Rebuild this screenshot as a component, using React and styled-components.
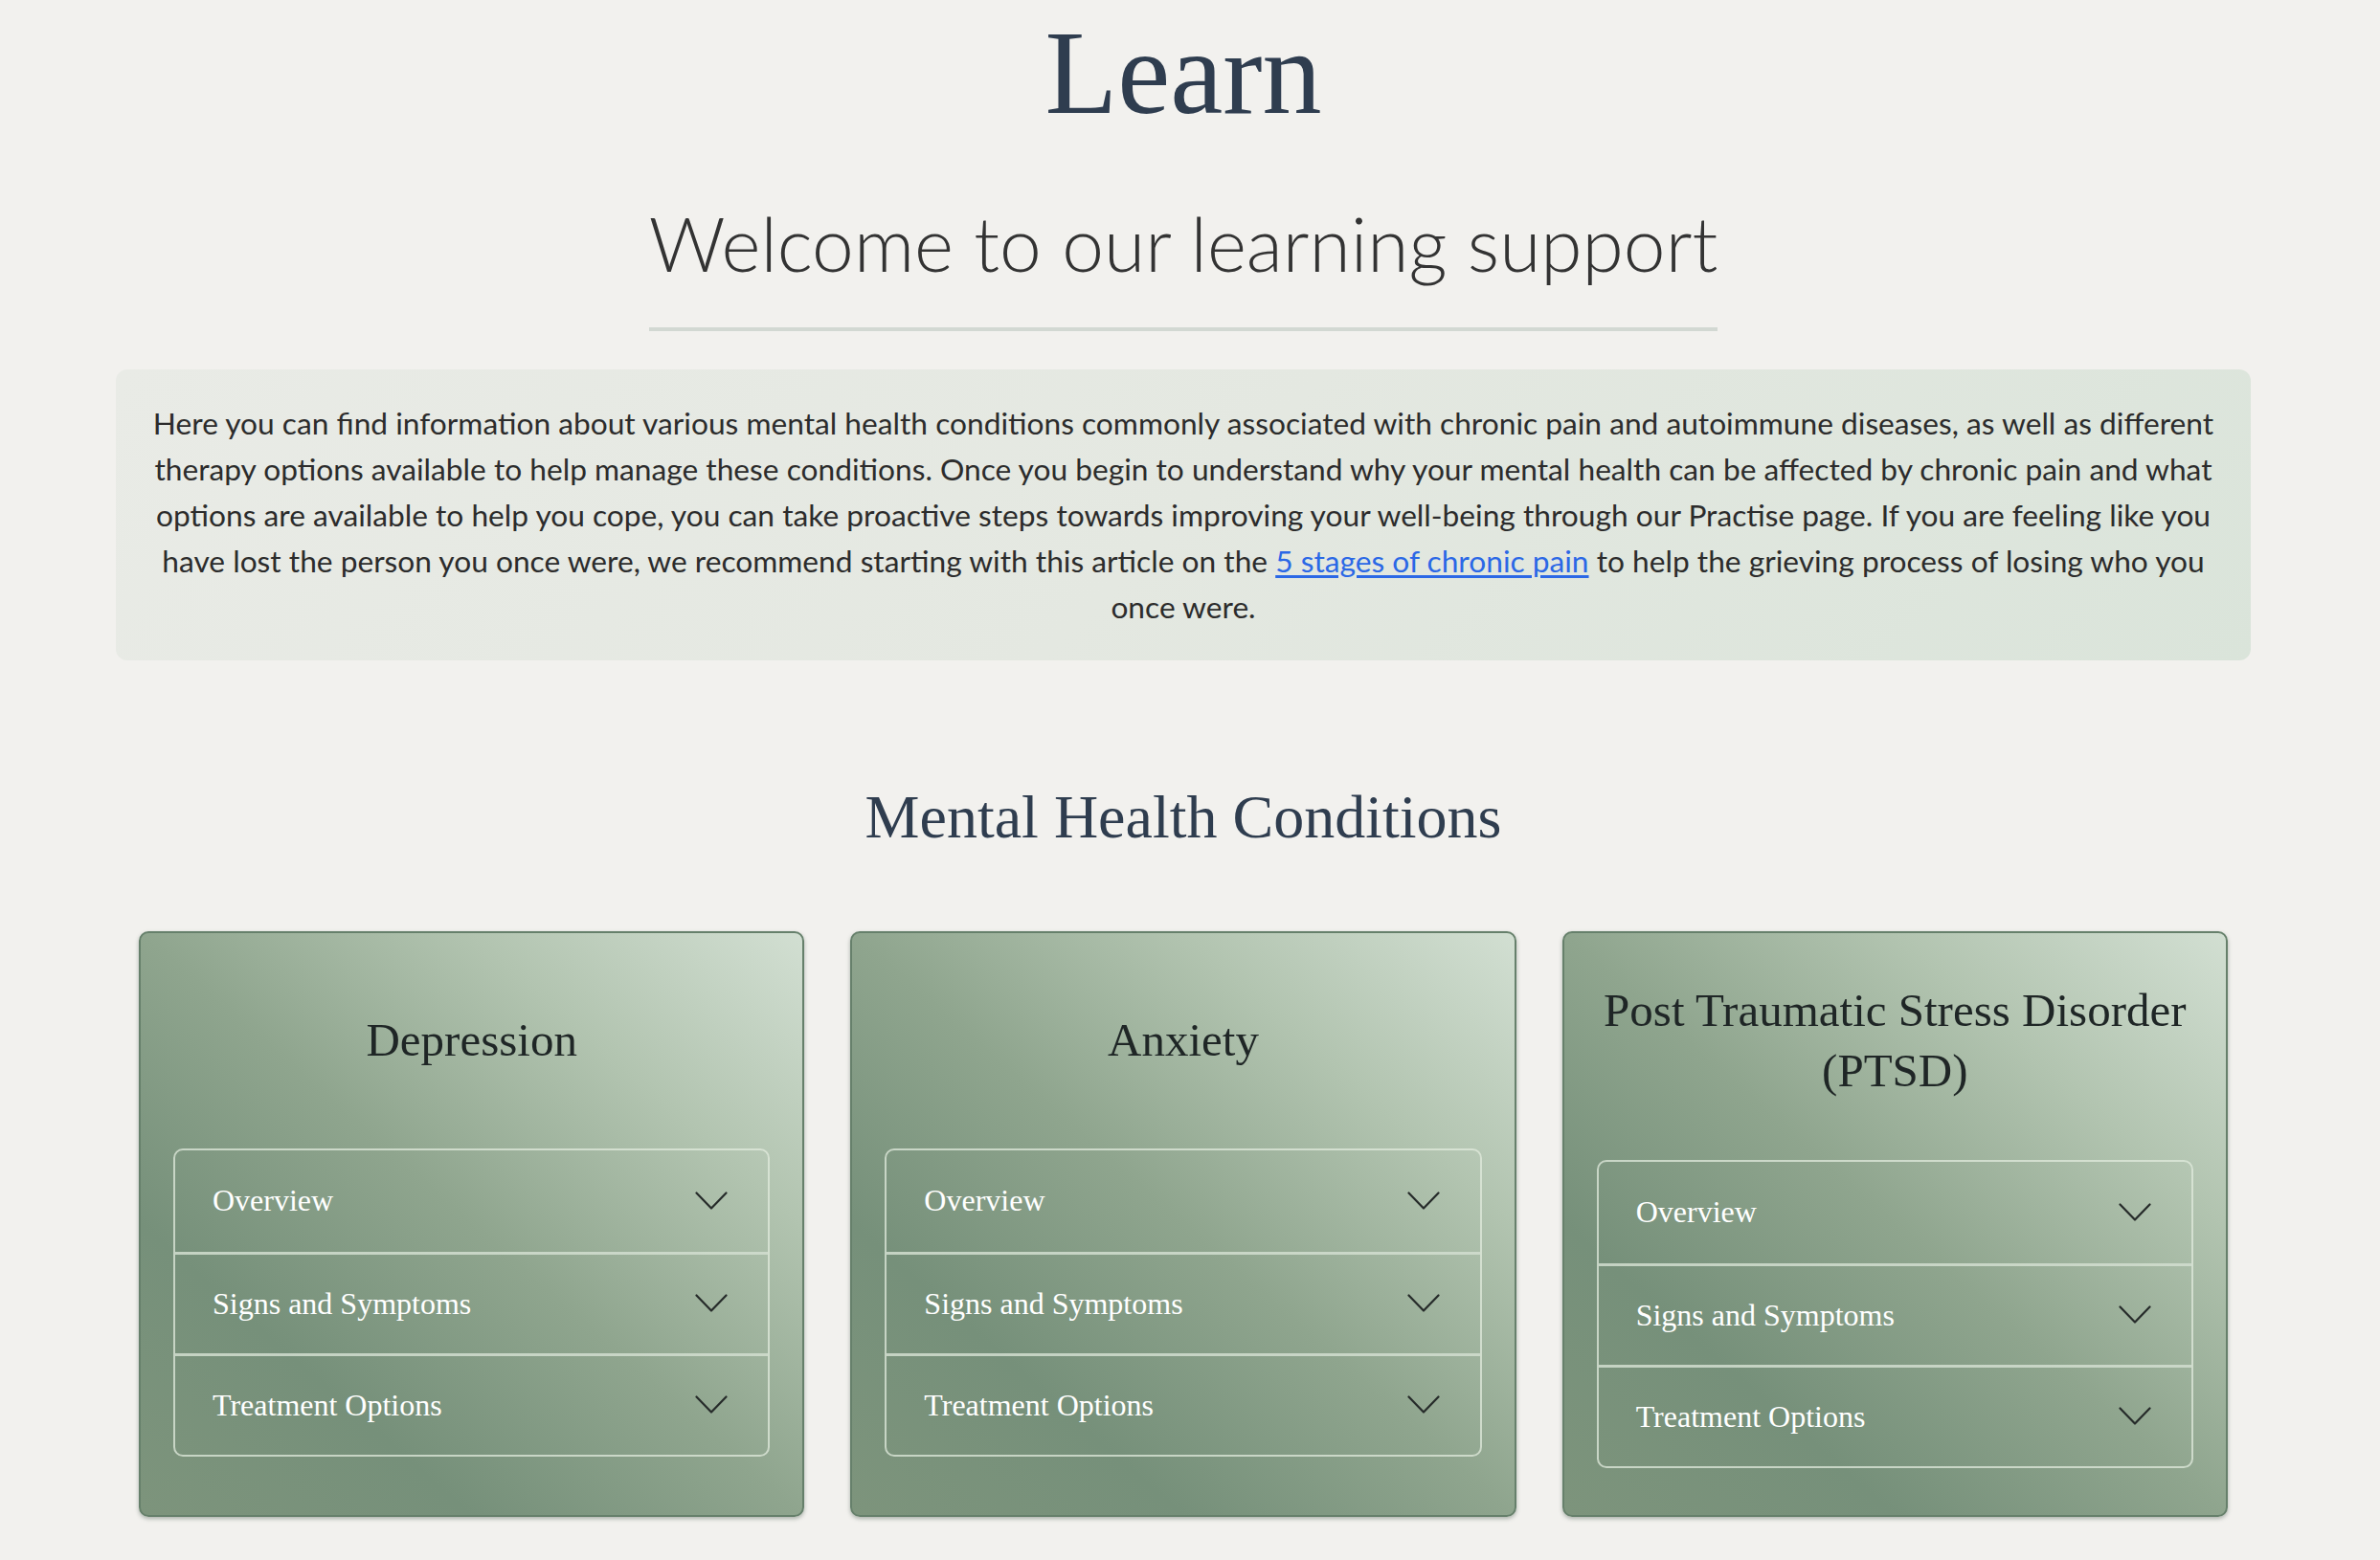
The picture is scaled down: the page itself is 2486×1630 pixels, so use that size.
import React from 'react';
import styled, { createGlobalStyle } from 'styled-components';

const GlobalStyle = createGlobalStyle`
  html, body {
    margin: 0;
    padding: 0;
    background: #f2f1ee;
  }
  body {
    min-height: 100vh;
    font-family: Lato, "Open Sans", sans-serif;
  }
`;

const conditions = [
  { title: 'Depression' },
  { title: 'Anxiety' },
  { title: 'Post Traumatic Stress Disorder (PTSD)' },
];

const sections = ['Overview', 'Signs and Symptoms', 'Treatment Options'];

const Chevron = () => (
  <svg width="34" height="20" viewBox="0 0 34 20" fill="none">
    <polyline points="1.5,1.5 17,17.5 32.5,1.5" stroke="#262b2a" strokeWidth="2.2" strokeLinecap="round" strokeLinejoin="round" />
  </svg>
);

const App = () => {
  return (
    <>
      <GlobalStyle />
      <Page>
        <Title>Learn</Title>
        <SubtitleWrap>
          <Subtitle>Welcome to our learning support</Subtitle>
        </SubtitleWrap>
        <Intro>
          Here you can find information about various mental health conditions commonly associated with chronic pain
          and autoimmune diseases, as well as different therapy options available to help manage these conditions. Once
          you begin to understand why your mental health can be affected by chronic pain and what options are available
          to help you cope, you can take proactive steps towards improving your well-being through our Practise page. If
          you are feeling like you have lost the person you once were, we recommend starting with this article on the{' '}
          <IntroLink href="#">5 stages of chronic pain</IntroLink> to help the grieving process of losing who you once
          were.
        </Intro>
        <SectionTitle>Mental Health Conditions</SectionTitle>
        <CardGrid>
          {conditions.map((c) => (
            <Card key={c.title}>
              <CardTitle>{c.title}</CardTitle>
              <Accordion>
                {sections.map((s) => (
                  <AccordionRow key={s}>
                    <RowLabel>{s}</RowLabel>
                    <Chevron />
                  </AccordionRow>
                ))}
              </Accordion>
            </Card>
          ))}
        </CardGrid>
      </Page>
    </>
  );
};

const Page = styled.main`
  padding: 3px 135px 60px 121px;
  display: flex;
  flex-direction: column;
  align-items: stretch;
`;

const Title = styled.h1`
  margin: 0;
  text-align: center;
  font-family: "Liberation Serif", "DejaVu Serif", serif;
  font-weight: 400;
  font-size: 124px;
  line-height: 1.2;
  color: #2f3d4f;
`;

const SubtitleWrap = styled.div`
  display: flex;
  justify-content: center;
  margin-top: 55px;
`;

const Subtitle = styled.h2`
  margin: 0;
  padding-bottom: 41px;
  border-bottom: 4px solid #d2d8d2;
  font-family: Lato, sans-serif;
  font-weight: 300;
  font-size: 78.5px;
  line-height: 1.2;
  color: #333333;
`;

const Intro = styled.p`
  margin: 40px 0 0;
  padding: 32px 26px;
  border-radius: 12px;
  background: linear-gradient(135deg, #e9ebe6 0%, #e4e8e1 50%, #dae4da 100%);
  font-family: Lato, sans-serif;
  font-size: 31.7px;
  line-height: 48px;
  text-align: center;
  color: #2c2c2c;
`;

const IntroLink = styled.a`
  color: #2b68e6;
  text-decoration: underline;
  text-underline-offset: 3px;
`;

const SectionTitle = styled.h2`
  margin: 126px 0 0;
  text-align: center;
  font-family: "Liberation Serif", "DejaVu Serif", serif;
  font-weight: 400;
  font-size: 64px;
  line-height: 1.2;
  color: #2f3d4f;
`;

const CardGrid = styled.section`
  margin-top: 80px;
  padding: 0 24px;
  display: grid;
  grid-template-columns: repeat(3, 1fr);
  gap: 48px;
`;

const Card = styled.article`
  display: flex;
  flex-direction: column;
  justify-content: center;
  gap: 62px;
  padding: 49px 34px;
  border: 2px solid #66806b;
  border-radius: 10px;
  background: linear-gradient(
    to top right,
    #7d947c 0%,
    #76907a 25%,
    #8fa58e 50%,
    #b2c4b0 75%,
    #d2dfd2 100%
  );
  box-shadow: 0 2px 4px rgba(40, 60, 45, 0.35);
`;

const CardTitle = styled.h3`
  margin: 0;
  min-height: 102px;
  display: flex;
  align-items: center;
  justify-content: center;
  text-align: center;
  font-family: "Liberation Serif", "DejaVu Serif", serif;
  font-weight: 400;
  font-size: 49px;
  line-height: 63px;
  color: #1f2626;
`;

const Accordion = styled.div`
  border: 2px solid rgba(225, 235, 222, 0.75);
  border-radius: 10px;
  overflow: hidden;
`;

const AccordionRow = styled.div`
  height: 106px;
  display: flex;
  align-items: center;
  justify-content: space-between;
  padding: 0 42px 0 39px;
  box-sizing: border-box;

  & + & {
    border-top: 3px solid rgba(210, 222, 208, 0.85);
  }
`;

const RowLabel = styled.span`
  font-family: "Liberation Serif", "DejaVu Serif", serif;
  font-size: 32px;
  color: #ffffff;
`;

export default App;
